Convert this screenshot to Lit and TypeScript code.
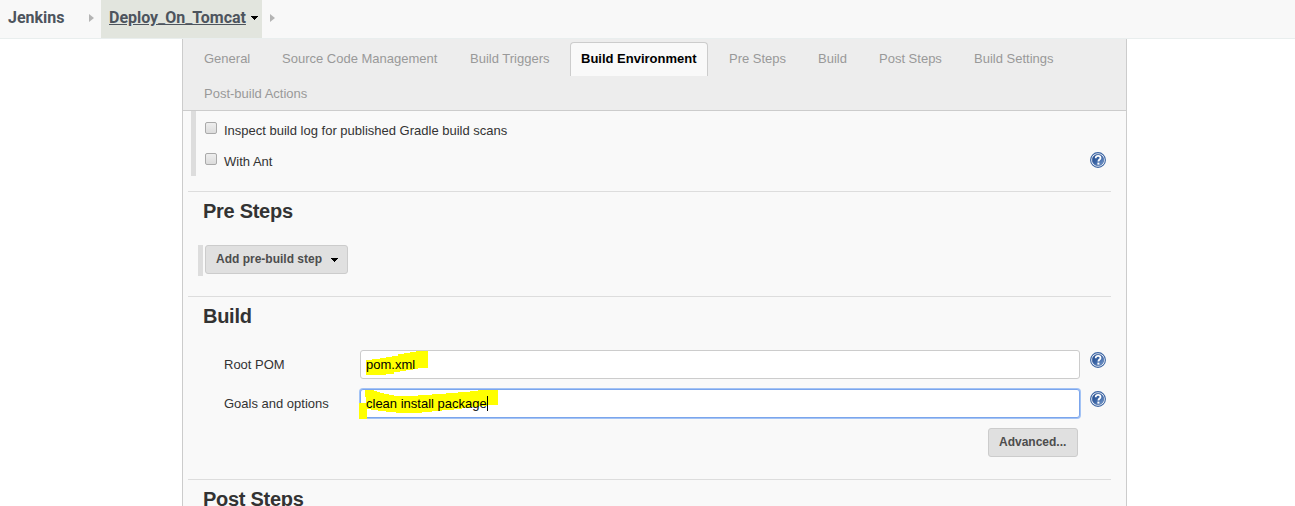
import { LitElement, html, css, svg } from "lit";
import { customElement, property } from "lit/decorators.js";
import { classMap } from "lit/directives/class-map.js";

@customElement("help-icon")
class HelpIcon extends LitElement {
  static styles = css`
    :host { display: block; width: 16px; height: 16px; }
    svg { display: block; }
  `;
  render() {
    return html`<svg width="16" height="16" viewBox="0 0 16 16">
      <defs>
        <linearGradient id="g" x1="0" y1="0" x2="1" y2="1">
          <stop offset="0" stop-color="#1f4788" />
          <stop offset="0.5" stop-color="#3c66a6" />
          <stop offset="1" stop-color="#7d9fd0" />
        </linearGradient>
      </defs>
      <circle cx="8" cy="8" r="7.4" fill="#fff" stroke="#3a64a3" stroke-width="1.1" />
      <circle cx="8" cy="8" r="5.8" fill="url(#g)" stroke="#2d5596" stroke-width="0.5" />
      <path d="M5.7 6.2C5.7 4.6 6.7 3.8 8.1 3.8s2.4.8 2.4 2.1c0 1.6-2.1 1.7-2.1 3.5" fill="none" stroke="#fff" stroke-width="1.8" />
      <rect x="7.4" y="10.6" width="2" height="2" fill="#fff" />
    </svg>`;
  }
}

@customElement("section-title")
class SectionTitle extends LitElement {
  @property() label = "";
  static styles = css`
    :host { display: block; margin: 0 15px 0 5px; border-top: 1px solid #ddd; }
    h2 { margin: 0; padding: 7px 0 0 15px; font: bold 20px/24px "Liberation Sans", Arial, sans-serif; letter-spacing: -0.28px; color: #333; white-space: nowrap; }
  `;
  render() {
    return html`<h2>${this.label}</h2>`;
  }
}

const caret = svg`<path d="M0 0h7v1h-1v1h-1v1h-1v1h-1v-1h-1v-1h-1v-1h-1z" fill="#000" />`;

@customElement("app-root")
class AppRoot extends LitElement {
  private tabs = [
    { label: "General", width: 46 },
    { label: "Source Code Management", width: 156 },
    { label: "Build Triggers", width: 79 },
    { label: "Build Environment", width: 116, active: true },
    { label: "Pre Steps", width: 57 },
    { label: "Build", width: 29 },
    { label: "Post Steps", width: 63 },
    { label: "Build Settings", width: 80 },
    { label: "Post-build Actions", width: 104 },
  ];

  static styles = css`
    :host { display: block; width: 1295px; height: 506px; overflow: hidden; background: #fff; font: 13px/16px "Liberation Sans", Arial, sans-serif; color: #333; }
    * { box-sizing: border-box; }
    svg { display: block; flex: none; }
    .crumbs { display: flex; align-items: stretch; height: 39px; background: #f8f8f8; border-bottom: 1px solid #e9eeee; font: bold 16px/35px Roboto, sans-serif; letter-spacing: -0.02px; color: #4d545d; white-space: nowrap; }
    .home { width: 101px; padding-left: 8px; display: flex; }
    .home .name { width: 81px; }
    .arrow { margin-top: 14px; }
    .job { width: 161px; padding-left: 8px; background: #e2e5de; display: flex; margin-right: 8px; }
    .job .name { width: 142px; text-decoration: underline; }
    .job svg { margin-top: 16px; }
    .panel { width: 945px; height: 467px; margin-left: 182px; border: solid #ccc; border-width: 0 1px; background: #f9f9f9; overflow: hidden; }
    .tabs { display: flex; flex-wrap: wrap; align-content: flex-start; gap: 1px 8px; height: 72px; padding: 3px 9px 0; background: #ededed; border-bottom: 1px solid #ccc; color: #999; white-space: nowrap; }
    .tab { padding: 8px 11px 0; border: 1px solid transparent; border-bottom: 0; box-sizing: content-box; height: 25px; }
    .tab.active { margin: 0 1px; padding: 8px 10px 0; color: #000; font-weight: bold; background: #f9f9f9; border-color: #ccc; border-radius: 4px 4px 0 0; }
    .options { margin: 0 15px 15px 8px; height: 65px; border-left: 5px solid #ddd; padding: 11px 0 0 9px; display: flex; flex-direction: column; gap: 15px; }
    .option { display: flex; align-items: flex-start; height: 16px; }
    .option .text { margin: 1px 0 0 7px; flex: 1; }
    .option help-icon { margin: -1px 5px 0 0; }
    .box { width: 12px; height: 12px; border: 1px solid #aaa; border-radius: 2px; background: linear-gradient(#eee, #dcdcdc); }
    .btn { height: 29px; border: 1px solid #ccc; border-radius: 3px; background: #e0e0e0; font: bold 12px/26px "Liberation Sans", Arial, sans-serif; color: #4d4d4d; display: flex; padding-left: 10px; white-space: nowrap; }
    .step { margin: 22px 0 20px 15px; height: 31px; border-left: 5px solid #ddd; padding-left: 2px; }
    .step .btn { width: 143px; }
    .step .label { width: 115px; }
    .step svg { margin-top: 12px; }
    .rows { padding: 22px 20px 0 41px; }
    .row { display: grid; grid-template-columns: 136px 720px 10px 16px; height: 39px; align-items: start; }
    .row .text { padding-top: 7px; }
    .row help-icon { grid-column: 4; margin-top: 2px; }
    .input { position: relative; height: 29px; border: 1px solid #ccc; border-radius: 3px; background: #fff; color: #000; line-height: 27px; padding-left: 5px; }
    .input.focus { border-color: #7ba5ec; box-shadow: 0 0 0 1px #a3c3f5; }
    .input .value { position: relative; }
    .caret { display: inline-block; width: 1px; height: 15px; background: #000; vertical-align: -3px; }
    .mark { position: absolute; left: -3px; top: -1px; overflow: visible; }
    .more { display: flex; justify-content: flex-end; padding-right: 28px; margin-bottom: 22px; }
    .more .btn { width: 90px; }
  `;

  private arrow() {
    return html`<svg class="arrow" width="5" height="8" viewBox="0 0 5 8"><path d="M0 0L5 4L0 8z" fill="#b4b4b4" /></svg>`;
  }

  render() {
    return html`
      <nav class="crumbs">
        <div class="home"><span class="name">Jenkins</span>${this.arrow()}</div>
        <div class="job"><span class="name">Deploy_On_Tomcat</span><svg width="7" height="4">${caret}</svg></div>
        ${this.arrow()}
      </nav>
      <main class="panel">
        <div class="tabs">
          ${this.tabs.map((t) => html`<div class=${classMap({ tab: true, active: !!t.active })} style="width:${t.width}px">${t.label}</div>`)}
        </div>
        <div class="options">
          <div class="option"><span class="box"></span><span class="text">Inspect build log for published Gradle build scans</span></div>
          <div class="option"><span class="box"></span><span class="text">With Ant</span><help-icon></help-icon></div>
        </div>
        <section-title label="Pre Steps"></section-title>
        <div class="step"><div class="btn"><span class="label">Add pre-build step</span><svg width="7" height="4">${caret}</svg></div></div>
        <section-title label="Build"></section-title>
        <div class="rows">
          <div class="row">
            <span class="text">Root POM</span>
            <div class="input">
              <svg class="mark" width="72" height="28"><path d="M8 10H14V9H22V8H28V7H34V6H40V4H46V3H52V2H58V1H70V18H60V19H55V20H48V21H42V22H36V24H28V25H8z" fill="#ff0" /></svg>
              <span class="value">pom.xml</span>
            </div>
            <help-icon></help-icon>
          </div>
          <div class="row">
            <span class="text">Goals and options</span>
            <div class="input focus">
              <svg class="mark" width="144" height="32"><path d="M7 1H16V2H19V3H22V4H26V5H31V6H36V7H60V6H74V5H88V4H100V3H112V2H120V1H140V16H129V17H121V18H112V19H104V20H96V21H84V22H74V23H64V24H38V23H28V22H20V21H13V20H9V30H1V14H8V8H7z" fill="#ff0" /></svg>
              <span class="value">clean install package<i class="caret"></i></span>
            </div>
            <help-icon></help-icon>
          </div>
          <div class="more"><div class="btn">Advanced...</div></div>
        </div>
        <section-title label="Post Steps"></section-title>
      </main>
    `;
  }
}
